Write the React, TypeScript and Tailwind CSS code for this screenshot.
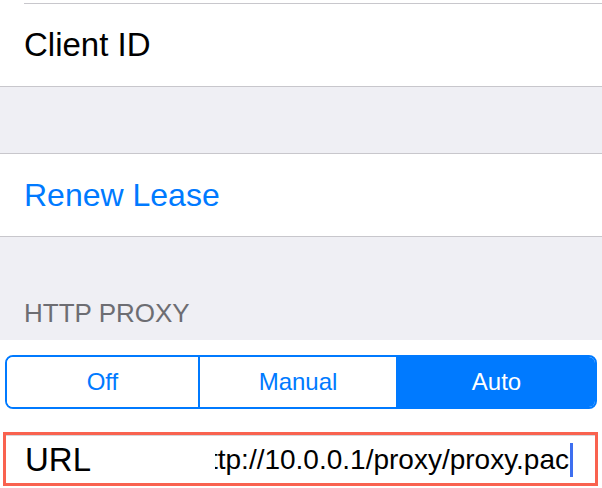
const SEP = "h-px bg-[#c8c7cc]";

function Segmented({ options, active }: { options: string[]; active: string }) {
  return (
    <div className="mx-[5px] mt-[15px] grid h-[54px] grid-cols-[191px_198px_1fr] overflow-hidden rounded-[8px] border-2 border-[#007aff]">
      {options.map((opt, i) => (
        <div
          key={opt}
          className={
            "flex items-center justify-center text-[24px] " +
            (i > 0 ? "border-l-2 border-[#007aff] " : "") +
            (opt === active ? "bg-[#007aff] text-white" : "bg-white text-[#007aff]")
          }
        >
          {opt}
        </div>
      ))}
    </div>
  );
}

export default function App() {
  return (
    <div
      className="h-[488px] w-[602px] overflow-hidden bg-white"
      style={{ fontFamily: '"Liberation Sans", Arial, sans-serif' }}
    >
      {/* first cell */}
      <div className="pl-[24px] pt-[3px]">
        <div className={SEP} />
      </div>
      <div className="flex h-[82px] items-center pl-[24px] text-[33px] text-black">
        Client ID
      </div>
      <div className={SEP} />

      <div className="h-[66px] bg-[#efeff4]" />
      <div className={SEP} />

      <div className="flex h-[82px] items-center pl-[24px] text-[32px] text-[#007aff]">
        Renew Lease
      </div>
      <div className={SEP} />

      <div className="h-[103px] bg-[#efeff4] pl-[24px] pt-[63px]">
        <div className="text-[26px] leading-[26px] text-[#6d6d72]">HTTP PROXY</div>
      </div>

      <Segmented options={["Off", "Manual", "Auto"]} active="Auto" />

      {/* URL field, highlighted */}
      <div className="ml-[3px] mt-[23px] h-[54px] w-[595px] border-[3px] border-[#f9624f]">
        <div className="h-px bg-[#d6d6da]" />
        <div className="flex h-[47px] items-center">
          <div className="w-[209px] shrink-0 pl-[19px] text-[33px] text-black">URL</div>
          <div className="flex min-w-0 flex-1 items-center justify-end overflow-hidden pr-[22px]">
            <span className="whitespace-nowrap text-[28px] text-black">http://10.0.0.1/proxy/proxy.pac</span>
            <span className="ml-[1px] h-[34px] w-[3px] shrink-0 bg-[#3e6ff0]" />
          </div>
        </div>
      </div>
    </div>
  );
}
